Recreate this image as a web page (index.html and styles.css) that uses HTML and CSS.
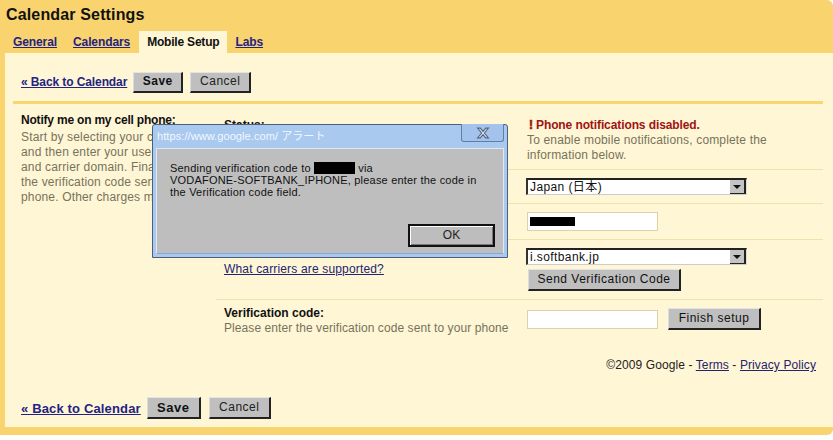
FILE: index.html
```html
<!DOCTYPE html>
<html lang="en">
<head>
<meta charset="utf-8">
<title>Calendar Settings</title>
<link rel="stylesheet" href="styles.css">
</head>
<body>
<div class="app">
  <h1 class="title">Calendar Settings</h1>
  <nav class="tabs">
    <a class="tab" href="#">General</a>
    <a class="tab" href="#">Calendars</a>
    <span class="tab active">Mobile Setup</span>
    <a class="tab" href="#">Labs</a>
  </nav>
  <main class="panel">
    <div class="actions top">
      <a class="back" href="#">« Back to Calendar</a>
      <span class="btn save">Save</span>
      <span class="btn cancel">Cancel</span>
    </div>
    <div class="content">
      <section class="intro">
        <h2 class="label">Notify me on my cell phone:</h2>
        <p class="hint">Start by selecting your country<br>and then enter your username<br>and carrier domain. Finally enter<br>the verification code sent to your<br>phone. Other charges may apply.</p>
      </section>
      <section class="form">
        <div class="row status">
          <div class="field"><span class="label">Status:</span></div>
          <div class="ctl">
            <div class="alert"><span class="bang">!</span>Phone notifications disabled.</div>
            <p class="hint">To enable mobile notifications, complete the<br>information below.</p>
          </div>
        </div>
        <div class="row country">
          <div class="field"><span class="label">Country:</span></div>
          <div class="ctl"><div class="select"><span class="val">Japan (日本)</span><span class="arrow"></span></div></div>
        </div>
        <div class="row phone">
          <div class="field"><span class="label">Phone number:</span></div>
          <div class="ctl"><div class="input"><span class="mask"></span></div></div>
        </div>
        <div class="row carrier">
          <div class="field">
            <span class="label">Carrier:</span>
            <a class="link support" href="#">What carriers are supported?</a>
          </div>
          <div class="ctl">
            <div class="select"><span class="val">i.softbank.jp</span><span class="arrow"></span></div>
            <span class="btn send">Send Verification Code</span>
          </div>
        </div>
        <div class="row code">
          <div class="field">
            <span class="label">Verification code:</span>
            <span class="hint">Please enter the verification code sent to your phone</span>
          </div>
          <div class="ctl inline">
            <div class="input"></div>
            <span class="btn finish">Finish setup</span>
          </div>
        </div>
        <div class="footer">©2009 Google - <a class="link" href="#">Terms</a> - <a class="link" href="#">Privacy Policy</a></div>
      </section>
    </div>
    <div class="actions bottom">
      <a class="back" href="#">« Back to Calendar</a>
      <span class="btn save">Save</span>
      <span class="btn cancel">Cancel</span>
    </div>
  </main>
</div>
<div class="dialog">
  <div class="dlg-title">
    <span>https://www.google.com/ アラート</span>
    <span class="close"><svg width="16" height="12" viewBox="0 0 14 11"><path d="M2 1h2.500l2.500 3 2.500-3h2.500l-3.700 4.500 3.700 4.500h-2.500l-2.500-3-2.500 3h-2.500l3.700-4.500z" fill="#dfe8f4" stroke="#51647e" stroke-width="1"/></svg></span>
  </div>
  <div class="dlg-body">
    <p class="dlg-text">Sending verification code to <span class="redact"></span> via<br>VODAFONE-SOFTBANK_IPHONE, please enter the code in<br>the Verification code field.</p>
    <div class="dlg-foot"><span class="ok">OK</span></div>
  </div>
</div>
</body>
</html>
```
FILE: styles.css
```css
* { box-sizing: border-box; }
html, body { margin: 0; padding: 0; background: #fff; overflow: hidden; }
body { width: 833px; height: 440px; font: 12px/15px "Liberation Sans", "Noto Sans CJK JP", sans-serif; color: #111; position: relative; }
a { color: #232383; }
p, h1, h2 { margin: 0; }

.app { height: 435px; background: #f8d36e; padding-left: 5px; display: flex; flex-direction: column; border-radius: 0 6px 6px 0; overflow: hidden; }
.title { font-size: 16px; line-height: 20px; font-weight: bold; letter-spacing: .15px; padding: 5px 0 6px 1px; color: #111; }
.tabs { display: flex; height: 22px; }
.tab { font-weight: bold; font-size: 12px; line-height: 22px; padding: 0 8px; white-space: nowrap; letter-spacing: -.1px; }
.tab.active { background: #fff6d6; color: #111; margin-left: 1px; letter-spacing: -.2px; }

.panel { flex: 1; background: #fff6d6; margin-bottom: 8px; display: flex; flex-direction: column; padding: 0 10px 0 8px; }

.actions { display: flex; align-items: center; padding-left: 8px; }
.top { height: 51px; padding-top: 10px; border-bottom: 3px solid #f5d672; gap: 7px; flex: none; }
.top .back { font-size: 12px; margin-right: -1px; letter-spacing: -.1px; }
.top .btn { height: 21px; }
.top .save { width: 50px; }
.top .cancel { width: 61px; }
.bottom { margin-top: auto; height: 30px; padding-bottom: 8px; gap: 6px; flex: none; }
.bottom .back { font-size: 13px; letter-spacing: .15px; }
.bottom .save { width: 54px; font-size: 13px; }
.bottom .cancel { width: 62px; margin-left: 2px; }
.back { font-weight: bold; white-space: nowrap; }

.btn { display: inline-flex; align-items: center; justify-content: center; height: 22px; background: #bfbfbf; color: #111; border-style: solid; border-width: 1px 2px 2px 1px; border-color: #e4e4e4 #222 #222 #dcdcdc; letter-spacing: .5px; white-space: nowrap; }
.save { font-weight: bold; }
.cancel { color: #222; }

.content { display: flex; flex: 1; min-height: 0; }
.intro { width: 203px; padding: 9px 0 0 8px; flex: none; }
.intro .label { font-size: 12px; line-height: 15px; font-weight: bold; letter-spacing: -.2px; margin-bottom: 2px; white-space: nowrap; }
.hint { color: #77735a; letter-spacing: .16px; }
.intro .hint { white-space: nowrap; }
.form { flex: 1; }
.row { display: flex; border-bottom: 1px solid #efe3a9; }
.field { width: 311px; flex: none; padding: 0 0 0 8px; display: flex; flex-direction: column; }
.label { font-weight: bold; color: #111; }
.ctl { flex: 1; }
.status { height: 66px; padding-top: 14px; }
.alert { font-weight: bold; color: #a01313; letter-spacing: -.1px; white-space: nowrap; }
.bang { display: inline-block; width: 9px; padding-left: 2px; font-weight: bold; -webkit-text-stroke: .6px #a01313; }
.country { height: 34px; padding-top: 8px; }
.phone { height: 36px; padding-top: 8px; }
.carrier { height: 60px; padding-top: 8px; }
.carrier .field { margin-top: -6px; }
.code { border-bottom: 0; height: 52px; padding-top: 6px; }
.code .hint { letter-spacing: .08px; white-space: nowrap; }
.code .ctl { padding-top: 4px; }
.inline { display: flex; gap: 10px; align-items: flex-start; }
.support { margin-top: 5px; letter-spacing: .16px; }
.link { color: #232370; }

.select { width: 221px; height: 17px; margin-left: -1px; background: #fff; border-style: solid; border-width: 2px 1px 1px 2px; border-color: #222 #ddd #ccc #333; display: flex; justify-content: space-between; }
.val { line-height: 14px; letter-spacing: .4px; padding-left: 2px; }
.arrow { width: 16px; background: #c4c4c4; border-right: 2px solid #222; border-bottom: 1px solid #222; display: flex; align-items: center; justify-content: center; }
.arrow::after { content: ""; border: 4px solid transparent; border-top: 4px solid #111; border-bottom: 0; }
.input { width: 131px; height: 19px; background: #fff; border: 1px solid #ddd3a8; padding: 4px 2px; }
.mask { display: block; width: 45px; height: 9px; background: #000; }
.send { width: 153px; margin: 4px 0 0 1px; }
.finish { width: 93px; margin-top: -2px; }
.footer { text-align: right; padding-right: 7px; margin-top: 6px; letter-spacing: .1px; color: #222; }

.dialog { position: absolute; left: 152px; top: 124px; width: 356px; height: 134px; background: #a9c9ef; border: 1px solid #4c5f78; border-radius: 3px 3px 0 0; display: flex; flex-direction: column; padding: 0 3px 3px; }
.dlg-title { height: 23px; color: #f2f7ff; font-family: "Liberation Sans", "Noto Sans CJK JP", sans-serif; font-size: 11px; line-height: 22px; letter-spacing: .08px; padding-left: 1px; position: relative; flex: none; }
.close { position: absolute; right: 0; top: -1px; width: 43px; height: 18px; border: 1px solid #5f7fa6; border-top: 0; border-radius: 0 0 3px 3px; display: flex; align-items: center; justify-content: center; background: #a3c3ec; }
.dlg-body { flex: 1; background: #bebebe; border: 1px solid #dde7f5; border-bottom-color: #86a8d8; padding: 13px 0 0 13px; display: flex; flex-direction: column; }
.dlg-text { font: 11px/12px "Liberation Sans", "Noto Sans CJK JP", sans-serif; letter-spacing: .2px; color: #111; white-space: nowrap; }
.redact { display: inline-block; width: 41px; height: 12px; background: #000; vertical-align: top; }
.dlg-foot { margin-top: auto; display: flex; justify-content: flex-end; padding: 0 8px 6px 0; }
.ok { width: 87px; height: 23px; border: 2px solid #111; background: #bdbdbd; box-shadow: inset 1px 1px 0 #fff, inset -1px -1px 0 #777; text-align: center; line-height: 19px; color: #222; }
```
